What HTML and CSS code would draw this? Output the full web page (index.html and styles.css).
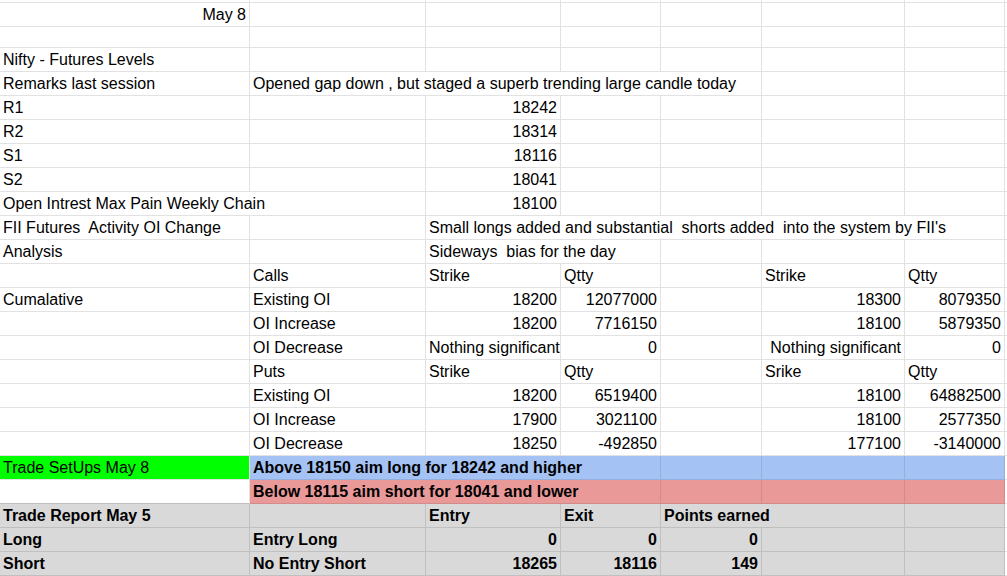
FILE: index.html
```html
<!DOCTYPE html>
<html lang="en">

<head>
    <meta charset="UTF-8">
    <meta name="viewport" content="width=device-width, initial-scale=1.0">
    <title>Nifty - Futures Levels</title>
    <link rel="stylesheet" href="styles.css">
</head>

<body>
    <table class="sheet">
        <colgroup>
            <col class="col-a">
            <col class="col-b">
            <col class="col-c">
            <col class="col-d">
            <col class="col-e">
            <col class="col-f">
            <col class="col-g">
            <col class="col-h">
        </colgroup>
        <tr class="cut">
            <td></td><td></td><td></td><td></td><td></td><td></td><td></td><td></td>
        </tr>
        <tr>
            <td class="num">May 8</td><td></td><td></td><td></td><td></td><td></td><td></td><td></td>
        </tr>
        <tr class="short-row">
            <td></td><td></td><td></td><td></td><td></td><td></td><td></td><td></td>
        </tr>
        <tr>
            <td>Nifty - Futures Levels</td><td></td><td></td><td></td><td></td><td></td><td></td><td></td>
        </tr>
        <tr>
            <td>Remarks last session</td>
            <td colspan="4">Opened gap down , but staged a superb trending large candle today</td>
            <td></td><td></td><td></td>
        </tr>
        <tr>
            <td>R1</td><td></td><td class="num">18242</td><td></td><td></td><td></td><td></td><td></td>
        </tr>
        <tr>
            <td>R2</td><td></td><td class="num">18314</td><td></td><td></td><td></td><td></td><td></td>
        </tr>
        <tr>
            <td>S1</td><td></td><td class="num">18116</td><td></td><td></td><td></td><td></td><td></td>
        </tr>
        <tr>
            <td>S2</td><td></td><td class="num">18041</td><td></td><td></td><td></td><td></td><td></td>
        </tr>
        <tr>
            <td colspan="2">Open Intrest Max Pain Weekly Chain</td>
            <td class="num">18100</td><td></td><td></td><td></td><td></td><td></td>
        </tr>
        <tr>
            <td>FII Futures&nbsp; Activity OI Change</td><td></td>
            <td colspan="5">Small longs added and substantial&nbsp; shorts added&nbsp; into the system by FII's</td>
            <td></td>
        </tr>
        <tr>
            <td>Analysis</td><td></td>
            <td colspan="2">Sideways&nbsp; bias for the day</td>
            <td></td><td></td><td></td><td></td>
        </tr>
        <tr>
            <td></td><td>Calls</td><td>Strike</td><td>Qtty</td><td></td><td>Strike</td><td>Qtty</td><td></td>
        </tr>
        <tr>
            <td>Cumalative</td><td>Existing OI</td>
            <td class="num">18200</td><td class="num">12077000</td><td></td>
            <td class="num">18300</td><td class="num">8079350</td><td></td>
        </tr>
        <tr>
            <td></td><td>OI Increase</td>
            <td class="num">18200</td><td class="num">7716150</td><td></td>
            <td class="num">18100</td><td class="num">5879350</td><td></td>
        </tr>
        <tr>
            <td></td><td>OI Decrease</td>
            <td class="num">Nothing significant</td><td class="num">0</td><td></td>
            <td class="num">Nothing significant</td><td class="num">0</td><td></td>
        </tr>
        <tr>
            <td></td><td>Puts</td><td>Strike</td><td>Qtty</td><td></td><td>Srike</td><td>Qtty</td><td></td>
        </tr>
        <tr>
            <td></td><td>Existing OI</td>
            <td class="num">18200</td><td class="num">6519400</td><td></td>
            <td class="num">18100</td><td class="num">64882500</td><td></td>
        </tr>
        <tr>
            <td></td><td>OI Increase</td>
            <td class="num">17900</td><td class="num">3021100</td><td></td>
            <td class="num">18100</td><td class="num">2577350</td><td></td>
        </tr>
        <tr>
            <td></td><td>OI Decrease</td>
            <td class="num">18250</td><td class="num">-492850</td><td></td>
            <td class="num">177100</td><td class="num">-3140000</td><td></td>
        </tr>
        <tr class="setup-long">
            <td class="green">Trade SetUps May 8</td>
            <td class="blue bold" colspan="3">Above 18150 aim long for 18242 and higher</td>
            <td class="blue"></td><td class="blue"></td><td class="blue"></td><td></td>
        </tr>
        <tr class="setup-short">
            <td></td>
            <td class="red bold" colspan="3">Below 18115 aim short for 18041 and lower</td>
            <td class="red"></td><td class="red"></td><td class="red"></td><td></td>
        </tr>
        <tr class="report">
            <td class="bold">Trade Report May 5</td><td></td>
            <td class="bold">Entry</td><td class="bold">Exit</td>
            <td class="bold" colspan="2">Points earned</td><td></td><td class="blank"></td>
        </tr>
        <tr class="report">
            <td class="bold">Long</td><td class="bold">Entry Long</td>
            <td class="num bold">0</td><td class="num bold">0</td><td class="num bold">0</td>
            <td></td><td></td><td class="blank"></td>
        </tr>
        <tr class="report">
            <td class="bold">Short</td><td class="bold">No Entry Short</td>
            <td class="num bold">18265</td><td class="num bold">18116</td><td class="num bold">149</td>
            <td></td><td></td><td class="blank"></td>
        </tr>
        <tr>
            <td></td><td></td><td></td><td></td><td></td><td></td><td></td><td></td>
        </tr>
    </table>
</body>

</html>
```

FILE: styles.css
```css
body {
    margin: 0;
    overflow: hidden;
    background: #fff;
    font-family: "Liberation Sans", Arial, sans-serif;
    font-size: 16px;
    color: #000;
}

.sheet {
    table-layout: fixed;
    border-collapse: separate;
    border-spacing: 0;
    width: 1015px;
}

.col-a { width: 250px; }
.col-b { width: 176px; }
.col-c { width: 135px; }
.col-d { width: 100px; }
.col-e { width: 101px; }
.col-f { width: 143px; }
.col-g { width: 100px; }
.col-h { width: 10px; }

.sheet td {
    box-sizing: border-box;
    height: 24px;
    padding: 0 3px;
    border-right: 1px solid #e2e2e2;
    border-bottom: 1px solid #e2e2e2;
    white-space: nowrap;
    overflow: hidden;
    line-height: 23px;
    text-align: left;
}

.sheet .cut td {
    height: 3px;
    line-height: 0;
    padding: 0;
}

.sheet .short-row td {
    height: 21px;
}

.sheet td.num {
    text-align: right;
}

.bold {
    font-weight: bold;
}

.sheet td.green {
    background: #00ff00;
}

.sheet td.blue {
    background: #a4c2f4;
    border-color: #94afdc;
}

.sheet td.red {
    background: #ea9999;
    border-color: #d38a8a;
}

.sheet .report td {
    background: #d9d9d9;
    border-color: #c0c0c0;
}

.sheet .report td.blank {
    background: #fff;
    border-color: #e2e2e2;
}

.setup-short td:first-child {
    border-bottom-color: #c0c0c0;
}
```
